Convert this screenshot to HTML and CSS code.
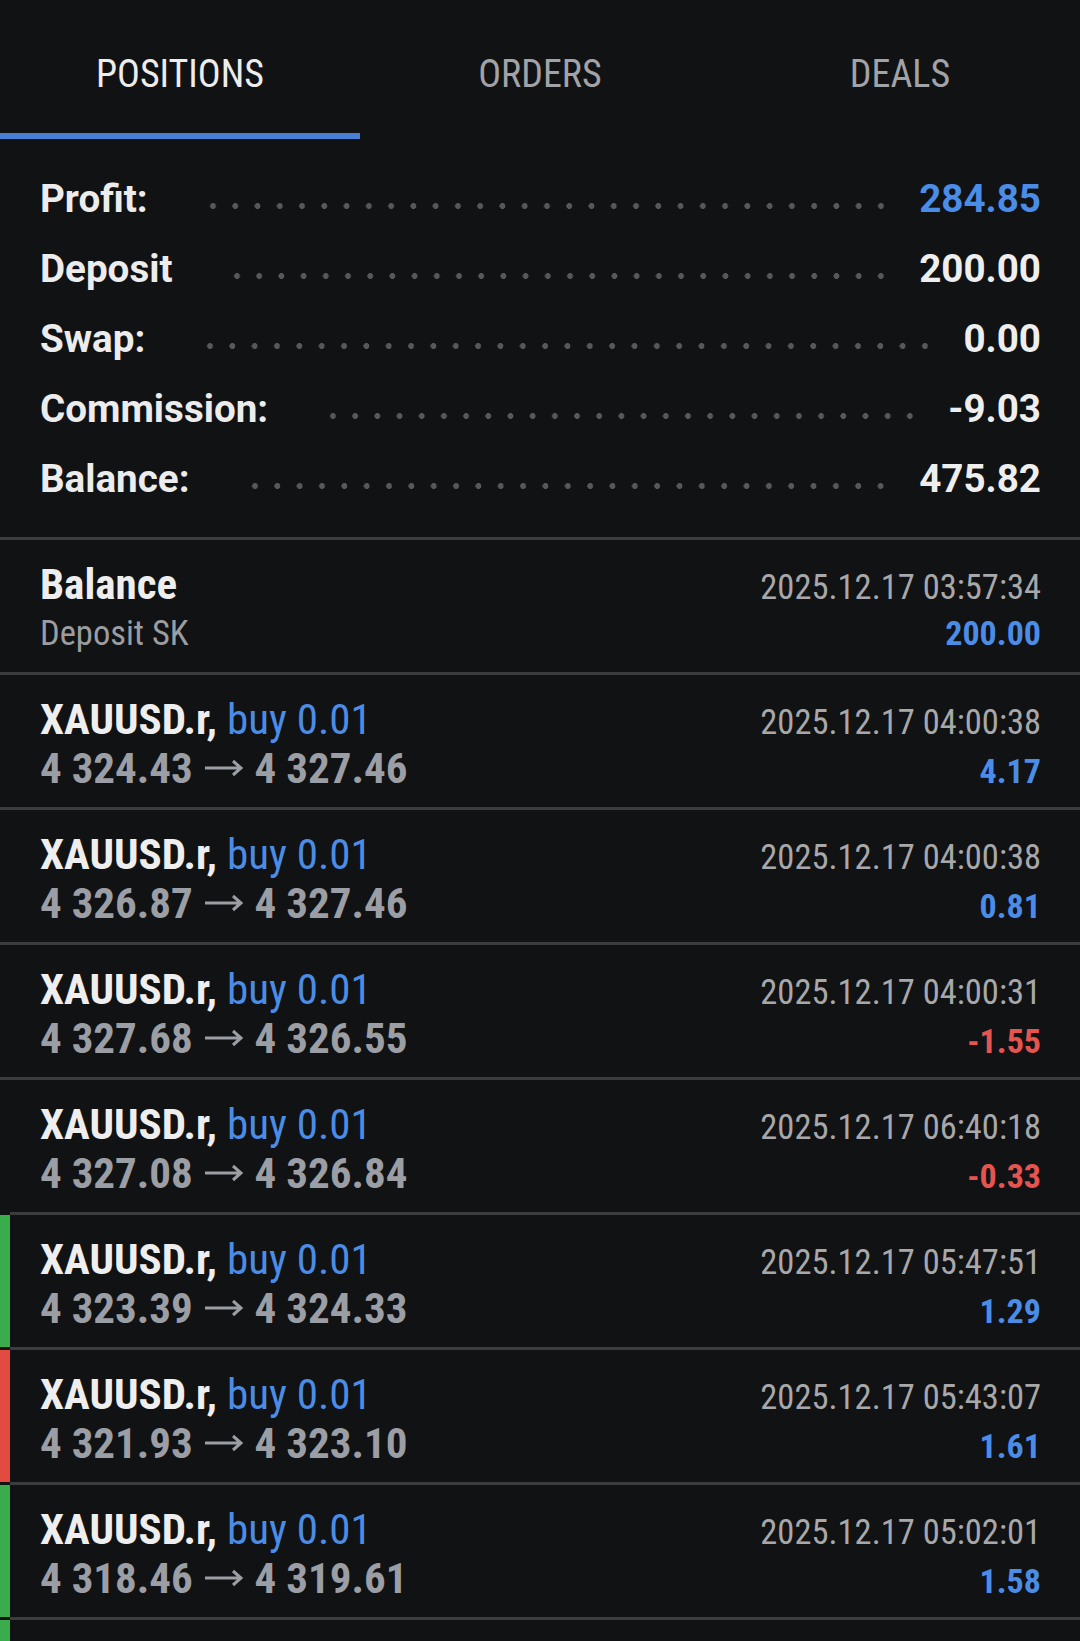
FILE: index.html
```html
<!DOCTYPE html>
<html lang="en">
<head>
    <meta charset="UTF-8">
    <meta name="viewport" content="width=device-width, initial-scale=1.0">
    <title>History</title>
    <link rel="stylesheet" href="styles.css">
</head>
<body>
    <div class="tabs">
      <div class="tab active">POSITIONS</div>
      <div class="tab">ORDERS</div>
      <div class="tab">DEALS</div>
    </div>

    <div class="summary">
      <div class="sum-row"><span class="sum-label">Profit:</span><span class="leader"></span><span class="sum-value blue">284.85</span></div>
      <div class="sum-row"><span class="sum-label">Deposit</span><span class="leader"></span><span class="sum-value">200.00</span></div>
      <div class="sum-row"><span class="sum-label">Swap:</span><span class="leader"></span><span class="sum-value">0.00</span></div>
      <div class="sum-row"><span class="sum-label">Commission:</span><span class="leader"></span><span class="sum-value">-9.03</span></div>
      <div class="sum-row"><span class="sum-label">Balance:</span><span class="leader"></span><span class="sum-value">475.82</span></div>
    </div>

    <div class="deals">
      <div class="deal">
        <span class="mark"></span>
        <div class="deal-body">
          <div class="line"><span class="title">Balance</span><span class="time">2025.12.17 03:57:34</span></div>
          <div class="line"><span class="comment">Deposit SK</span><span class="pl blue">200.00</span></div>
        </div>
      </div>
      <div class="deal">
        <span class="mark"></span>
        <div class="deal-body">
          <div class="line"><span class="title">XAUUSD.r, <span class="side">buy 0.01</span></span><span class="time">2025.12.17 04:00:38</span></div>
          <div class="line"><span class="price">4 324.43 <svg class="arrow" viewBox="0 0 40 20"><path d="M1 10H37M29 3l8 7-8 7"/></svg> 4 327.46</span><span class="pl blue">4.17</span></div>
        </div>
      </div>
      <div class="deal">
        <span class="mark"></span>
        <div class="deal-body">
          <div class="line"><span class="title">XAUUSD.r, <span class="side">buy 0.01</span></span><span class="time">2025.12.17 04:00:38</span></div>
          <div class="line"><span class="price">4 326.87 <svg class="arrow" viewBox="0 0 40 20"><path d="M1 10H37M29 3l8 7-8 7"/></svg> 4 327.46</span><span class="pl blue">0.81</span></div>
        </div>
      </div>
      <div class="deal">
        <span class="mark"></span>
        <div class="deal-body">
          <div class="line"><span class="title">XAUUSD.r, <span class="side">buy 0.01</span></span><span class="time">2025.12.17 04:00:31</span></div>
          <div class="line"><span class="price">4 327.68 <svg class="arrow" viewBox="0 0 40 20"><path d="M1 10H37M29 3l8 7-8 7"/></svg> 4 326.55</span><span class="pl red">-1.55</span></div>
        </div>
      </div>
      <div class="deal">
        <span class="mark"></span>
        <div class="deal-body">
          <div class="line"><span class="title">XAUUSD.r, <span class="side">buy 0.01</span></span><span class="time">2025.12.17 06:40:18</span></div>
          <div class="line"><span class="price">4 327.08 <svg class="arrow" viewBox="0 0 40 20"><path d="M1 10H37M29 3l8 7-8 7"/></svg> 4 326.84</span><span class="pl red">-0.33</span></div>
        </div>
      </div>
      <div class="deal">
        <span class="mark up"></span>
        <div class="deal-body">
          <div class="line"><span class="title">XAUUSD.r, <span class="side">buy 0.01</span></span><span class="time">2025.12.17 05:47:51</span></div>
          <div class="line"><span class="price">4 323.39 <svg class="arrow" viewBox="0 0 40 20"><path d="M1 10H37M29 3l8 7-8 7"/></svg> 4 324.33</span><span class="pl blue">1.29</span></div>
        </div>
      </div>
      <div class="deal">
        <span class="mark down"></span>
        <div class="deal-body">
          <div class="line"><span class="title">XAUUSD.r, <span class="side">buy 0.01</span></span><span class="time">2025.12.17 05:43:07</span></div>
          <div class="line"><span class="price">4 321.93 <svg class="arrow" viewBox="0 0 40 20"><path d="M1 10H37M29 3l8 7-8 7"/></svg> 4 323.10</span><span class="pl blue">1.61</span></div>
        </div>
      </div>
      <div class="deal">
        <span class="mark up"></span>
        <div class="deal-body">
          <div class="line"><span class="title">XAUUSD.r, <span class="side">buy 0.01</span></span><span class="time">2025.12.17 05:02:01</span></div>
          <div class="line"><span class="price">4 318.46 <svg class="arrow" viewBox="0 0 40 20"><path d="M1 10H37M29 3l8 7-8 7"/></svg> 4 319.61</span><span class="pl blue">1.58</span></div>
        </div>
      </div>
      <div class="deal">
        <span class="mark up"></span>
        <div class="deal-body"></div>
      </div>
    </div>
</body>
</html>
```

FILE: styles.css
```css
body {
  margin: 0;
  background: #111214;
  color: #ececec;
  font-family: Roboto, "Noto Sans", sans-serif;
  overflow: hidden;
}

/* tabs */
.tabs {
  display: grid;
  grid-template-columns: 1fr 1fr 1fr;
}
.tab {
  font-family: "Roboto Condensed", Roboto, sans-serif;
  font-stretch: 85%;
  font-size: 38px;
  line-height: 44px;
  text-align: center;
  color: #a2a3a7;
  padding: 52px 0 37px;
  border-bottom: 6px solid transparent;
}
.tab.active {
  color: #ededed;
  border-bottom-color: #4a7fd6;
}

/* summary */
.summary {
  padding: 25px 39px 23px 40px;
}
.sum-row {
  display: flex;
  align-items: center;
  height: 70px;
  font-size: 38.6px;
  font-weight: 700;
  line-height: 70px;
}
.leader {
  flex: 1;
  height: 6px;
  margin: 13px 27px 0 54px;
  background-image: radial-gradient(circle, #57585b 2.7px, transparent 3.2px);
  background-size: 22px 6px;
  background-repeat: space no-repeat;
}
.sum-value {
  color: #eeeeee;
}
.blue {
  color: #4b8de6 !important;
}
.red {
  color: #e65450 !important;
}

/* deals list */
.deal {
  display: flex;
  height: 135px;
}
.mark {
  width: 10px;
  flex-shrink: 0;
  border-top: 3px solid #3b3c3e;
  background-clip: padding-box;
}
.mark.up {
  border-top-color: #111214;
  background-color: #3aac4c;
}
.mark.down {
  border-top-color: #111214;
  background-color: #e24b40;
}
.deal-body {
  flex: 1;
  border-top: 3px solid #3b3c3e;
  padding: 20px 39px 0 30px;
  font-family: "Roboto Condensed", Roboto, sans-serif;
  font-stretch: 85%;
}
.line {
  display: flex;
  justify-content: space-between;
  align-items: baseline;
  height: 49px;
  line-height: 49px;
}
.title {
  font-size: 43px;
  font-weight: 700;
  color: #eeeeee;
}
.side {
  font-weight: 400;
  color: #4b8de6;
}
.comment {
  font-size: 34.5px;
  color: #9c9da0;
}
.price {
  font-size: 43px;
  font-weight: 700;
  color: #9b9ea4;
}
.arrow {
  width: 40px;
  height: 20px;
  margin: 0 1px;
  vertical-align: 5px;
  fill: none;
  stroke: currentColor;
  stroke-width: 3;
}
.time {
  font-size: 34.5px;
  color: #a8a8aa;
}
.pl {
  font-size: 34px;
  font-weight: 700;
}
```
